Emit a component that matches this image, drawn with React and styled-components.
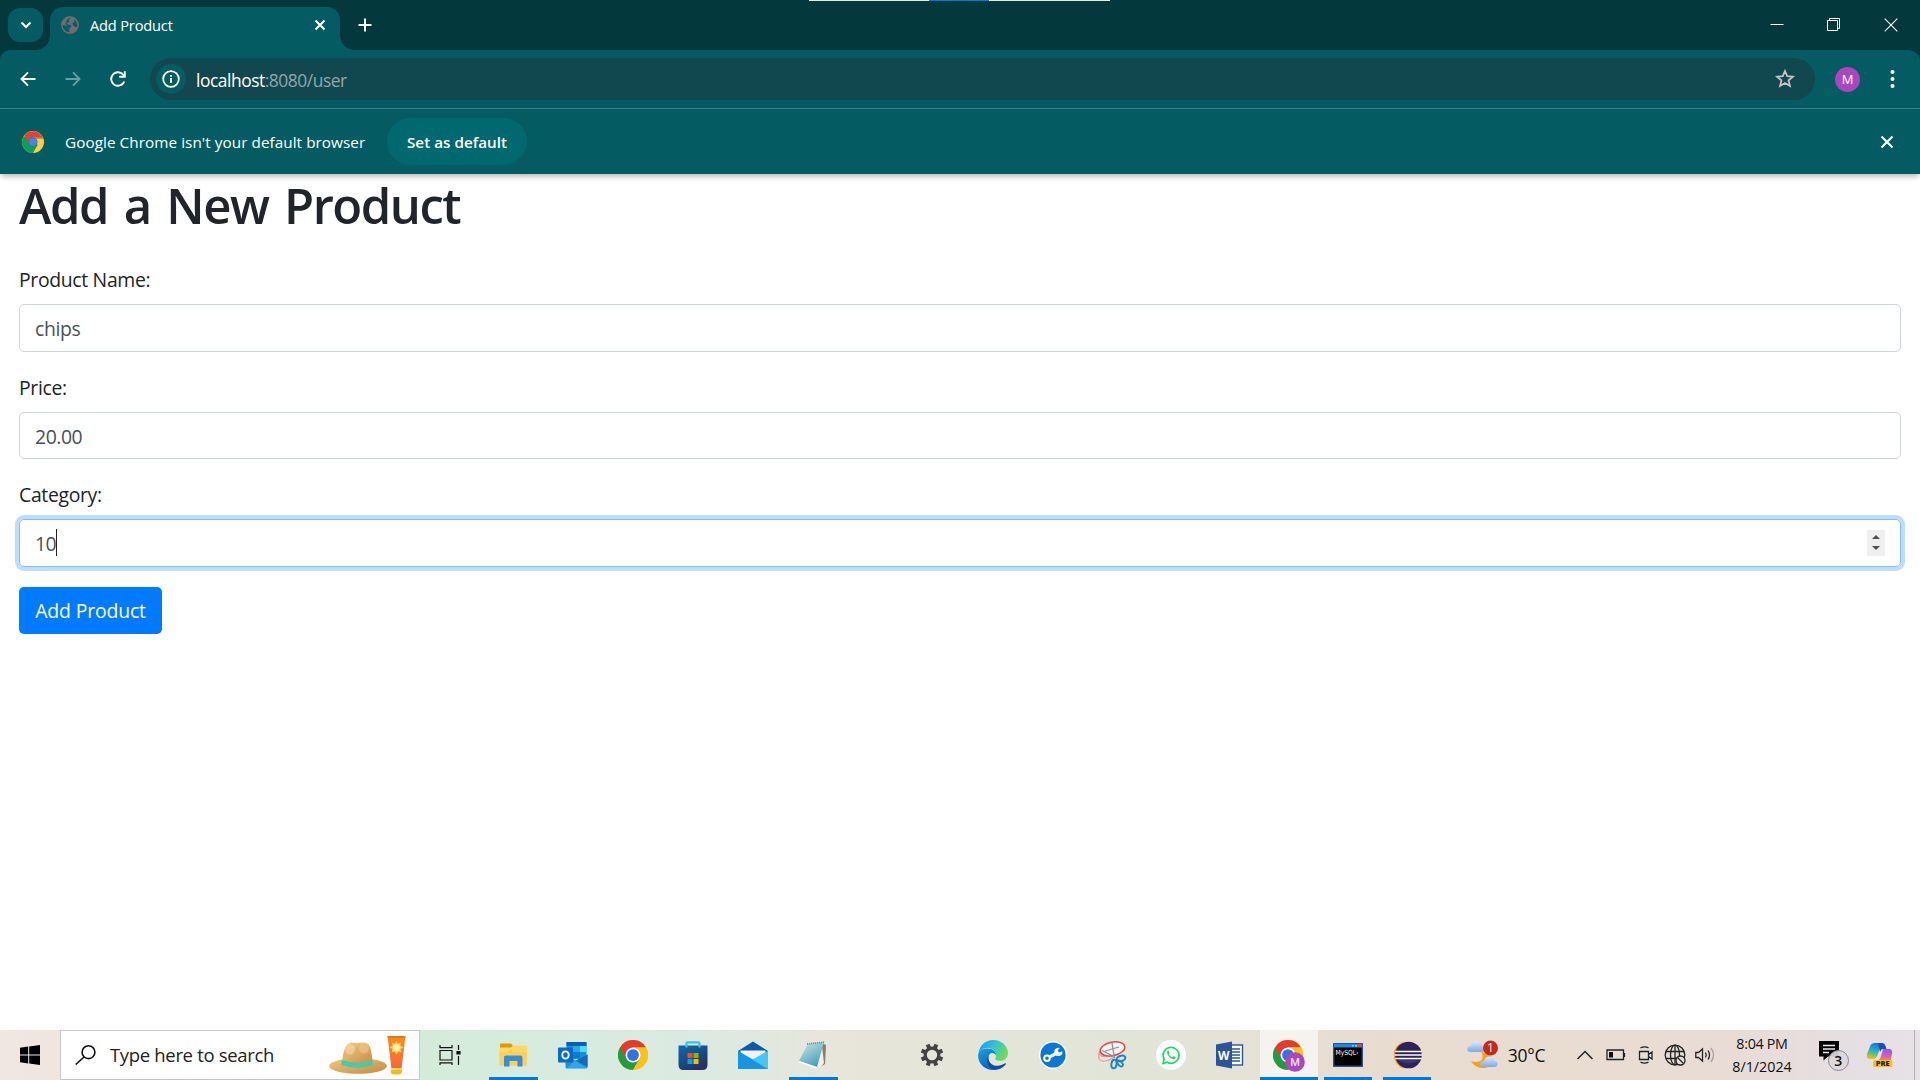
import React from 'react';
import styled, { createGlobalStyle, css } from 'styled-components';

const Global = createGlobalStyle`
  * { box-sizing: border-box; }
  html, body { margin: 0; padding: 0; background: #fff; overflow: hidden; }
  body { font-family: "Open Sans", "Noto Sans", sans-serif; }
  svg { display: block; flex: none; }
`;

const Screen = styled.div`
  width: 1920px;
  height: 1080px;
  display: flex;
  flex-direction: column;
  position: relative;
  overflow: hidden;
  background: #fff;
`;

const TopPeek = styled.div`
  position: absolute;
  top: 0;
  left: 809px;
  width: 301px;
  height: 1px;
  background: linear-gradient(90deg, #e4ece6 0 120px, #0078d7 120px 180px, #e4ece6 180px);
`;

const Text = styled.span`
  font-size: ${(p) => p.$size}px;
  letter-spacing: ${(p) => p.$track || 0}px;
  font-weight: ${(p) => p.$weight || 400};
  color: ${(p) => p.$color || 'inherit'};
  padding-top: ${(p) => p.$drop || 0}px;
  white-space: pre;
  line-height: 20px;
`;

/* browser chrome */

const TabStrip = styled.header`
  height: 50px;
  display: flex;
  align-items: center;
  padding-left: 8px;
  background: #03383d;
  color: #fff;
`;

const TabSearch = styled.button`
  width: 35px;
  height: 34px;
  border: 0;
  padding: 0;
  border-radius: 12px;
  background: #045c62;
  display: flex;
  align-items: center;
  justify-content: center;
`;

const Tab = styled.div`
  width: 290px;
  height: 43px;
  margin: 7px 0 0 7px;
  padding: 0 12px 7px 11px;
  display: flex;
  align-items: center;
  border-radius: 13px 13px 0 0;
  background: #045c62;
  position: relative;
  &::before, &::after {
    content: "";
    position: absolute;
    bottom: 0;
    width: 14px;
    height: 14px;
  }
  &::before { left: -14px; background: radial-gradient(circle at 0 0, transparent 13.5px, #045c62 14px); }
  &::after { right: -14px; background: radial-gradient(circle at 100% 0, transparent 13.5px, #045c62 14px); }
`;

const TabTitle = styled.div`
  flex: 1;
  display: flex;
  padding-left: 11px;
`;

const NewTab = styled.div`
  width: 50px;
  display: flex;
  justify-content: center;
`;

const Captions = styled.div`
  margin-left: auto;
  display: flex;
  height: 49px;
  padding-right: 1px;
`;

const Caption = styled.div`
  width: 57px;
  display: flex;
  align-items: center;
  justify-content: center;
`;

const ToolbarBack = styled.div`
  background: #03383d;
  height: 59px;
  flex: none;
`;

const Toolbar = styled.div`
  height: 59px;
  display: flex;
  align-items: center;
  border-radius: 10px 12px 0 0;
  box-shadow: inset 0 -1px 0 #3e8186;
  background: #045c62;
  padding: 0 0 1px 5px;
`;

const ToolButton = styled.div`
  width: 45px;
  display: flex;
  justify-content: center;
  opacity: ${(p) => (p.$dim ? 0.4 : 1)};
`;

const Omnibox = styled.div`
  width: 1665px;
  height: 42px;
  margin-left: 10px;
  padding: 0 19px 0 6px;
  border-radius: 21px;
  background: #11474e;
  display: flex;
  align-items: center;
`;

const SiteInfo = styled.div`
  width: 30px;
  height: 30px;
  border-radius: 50%;
  background: #045c62;
  display: flex;
  align-items: center;
  justify-content: center;
  margin-right: 10px;
`;

const Url = styled.div`
  flex: 1;
  display: flex;
`;

const Avatar = styled.div`
  width: 25px;
  height: 25px;
  border-radius: 50%;
  margin: 0 30px 0 20px;
  background: #ab47bc;
  color: #fff;
  display: flex;
  align-items: center;
  justify-content: center;
`;

const InfoBar = styled.div`
  height: 65px;
  flex: none;
  display: flex;
  align-items: center;
  padding: 0 26px 0 22px;
  background: #045c62;
  color: #fff;
  box-shadow: 0 3px 6px -1px rgba(0, 0, 0, 0.32);
`;

const InfoMessage = styled.div`
  width: 322px;
  margin-left: 21px;
  display: flex;
`;

const DefaultButton = styled.button`
  width: 140px;
  height: 47px;
  border: 0;
  padding: 0;
  border-radius: 24px;
  background: #00686f;
  color: #fff;
  font-family: inherit;
  display: flex;
  align-items: center;
  justify-content: center;
`;

const CloseInfo = styled.div`
  margin-left: auto;
`;

/* page */

const Page = styled.main`
  flex: 1;
  padding: 0 19px;
  color: #212529;
`;

const Title = styled.h1`
  margin: 0;
  height: 90px;
  font-size: 49px;
  line-height: 62px;
  font-weight: 600;
  letter-spacing: -1.5px;
  word-spacing: 4.5px;
`;

const Field = styled.div`
  height: 107.5px;
`;

const Label = styled.label`
  display: block;
  height: 40px;
  padding-top: 1px;
  line-height: 30px;
  font-size: 19.4px;
  letter-spacing: -0.33px;
`;

const Control = styled.div`
  height: 47.5px;
  border: 1px solid #ced4da;
  border-radius: 5px;
  padding: 0 15px;
  display: flex;
  align-items: center;
  color: #495057;
  ${(p) =>
    p.$focus &&
    css`
      border-color: #80bdff;
      box-shadow: 0 0 0 4px #bfdeff;
    `}
`;

const TextCaret = styled.i`
  width: 1px;
  height: 27px;
  background: #222;
`;

const Spinner = styled.div`
  width: 18px;
  height: 26px;
  margin-left: auto;
  background: #efefef;
  display: flex;
  flex-direction: column;
  align-items: center;
  justify-content: center;
  gap: 7px;
`;

const Submit = styled.button`
  width: 143px;
  height: 47px;
  border: 0;
  padding: 0;
  border-radius: 5px;
  background: #007bff;
  color: #fff;
  font-family: inherit;
  display: flex;
  align-items: center;
  justify-content: center;
`;

/* taskbar */

const Taskbar = styled.footer`
  height: 50px;
  flex: none;
  display: flex;
  background: linear-gradient(90deg, #efe7e1 0, #eee6df 60px, #d3ecd9 420px, #d8ebe1 600px, #dde9e1 740px,
    #e8e5db 820px, #e5e5d9 930px, #e1e5d8 1120px, #e4e3d6 1230px, #e8dcd0 1380px, #e9dcd1 1580px, #e8dcd6 1740px, #e5dfe3 1860px, #e6e2e6 1920px);
  color: #111;
`;

const Slot = styled.div`
  width: ${(p) => p.$w || 60}px;
  margin-left: ${(p) => p.$gap || 0}px;
  flex: none;
  height: 50px;
  display: flex;
  align-items: center;
  justify-content: center;
  background: ${(p) => (p.$active ? '#f4f3ee' : 'transparent')};
  ${(p) =>
    p.$line &&
    css`
      background-image: linear-gradient(#0078d7, #0078d7);
      background-repeat: no-repeat;
      background-size: ${p.$line}px 3px;
      background-position: center bottom;
    `}
`;

const Search = styled.div`
  width: 360px;
  height: 50px;
  flex: none;
  border: 1px solid #c8c8ca;
  background: #fff;
  display: flex;
  align-items: center;
  padding: 0 13px 0 14px;
`;

const SearchText = styled.div`
  flex: 1;
  padding-left: 14px;
  display: flex;
  color: #222;
`;

const Clock = styled.div`
  width: 80px;
  margin-left: 1px;
  display: flex;
  flex-direction: column;
  align-items: center;
  justify-content: center;
  gap: 3px;
`;

const ShowDesktop = styled.div`
  width: 6px;
  margin-left: auto;
  border-left: 1px solid #b5b1b4;
`;

const Stroke = ({ w, h, box, width = 2, color = '#fff', children, fill = 'none' }) => (
  <svg width={w} height={h} viewBox={box || `0 0 ${w} ${h}`} fill={fill} stroke={color} strokeWidth={width}>
    {children}
  </svg>
);

const ChromeMark = ({ size }) => (
  <svg width={size} height={size} viewBox="0 0 48 48">
    <circle cx="24" cy="24" r="24" fill="#fbc116" />
    <path d="M24 24 34.4 30 24 48A24 24 0 0 1 3.2 12Z" fill="#249a41" />
    <path d="M24 24V12H44.8A24 24 0 0 0 3.2 12L13.6 30Z" fill="#e33b2e" />
    <path d="M24 12H44.8A24 24 0 0 1 24 48L34.4 30Z" fill="#fbc116" />
    <circle cx="24" cy="24" r="12" fill="#fff" />
    <circle cx="24" cy="24" r="9.4" fill="#2f74e6" />
  </svg>
);

const ChromeClassic = () => (
  <svg width="22" height="22" viewBox="0 0 48 48">
    <circle cx="24" cy="24" r="24" fill="#ffcd40" />
    <path d="M24 24 34.400 30 24 48A24 24 0 0 1 4 11Z" fill="#0f9d58" />
    <path d="M24 24V14H45.800A24 24 0 0 0 5 10L15 27Z" fill="#db4437" />
    <path d="M24 14H45.800L46.500 17H32Z" fill="#8a4a2c" opacity=".6" />
    <circle cx="24" cy="24" r="9.800" fill="#2c6aa0" />
    <circle cx="24" cy="24" r="8.600" fill="#4285f4" />
  </svg>
);

const HatAndCream = () => (
  <svg width="78" height="42" viewBox="0 0 78 42">
    <defs>
      <linearGradient id="hat" x1="0" y1="0" x2="1" y2="1">
        <stop offset="0" stopColor="#f0c987" />
        <stop offset="1" stopColor="#c58a3c" />
      </linearGradient>
      <linearGradient id="tube" x1="0" y1="0" x2="0" y2="1">
        <stop offset="0" stopColor="#fb8c1c" />
        <stop offset="1" stopColor="#f4683b" />
      </linearGradient>
    </defs>
    <ellipse cx="30" cy="32" rx="29" ry="7.8" fill="url(#hat)" />
    <path d="M14 30C15 18 17 10 22 9 26 8 28 10 31 9 36 8 40 8 42 13 44 18 44 24 45 30 36 34 22 34 14 30Z" fill="url(#hat)" />
    <ellipse cx="22" cy="15" rx="5" ry="5.5" fill="#f6d9a6" opacity=".6" />
    <ellipse cx="36" cy="14" rx="5" ry="5.5" fill="#f6d9a6" opacity=".4" />
    <path d="M14 26Q30 31 44.500 26L45.500 31Q30 37 13 31Z" fill="#4cc9a8" />
    <path d="M59.500 2H77.500L73.500 35H63.500Z" fill="url(#tube)" />
    <path d="M59.500 2H77.500L77.200 4H59.800Z" fill="#e6780f" />
    <path d="M68.500 7 70 10 73 8.500 72.200 11.500 75.500 13.500 72.500 15 73.500 18.500 70.500 17.500 68.500 20.500 66.500 17.500 63.500 18.500 64.500 15 61.500 13.500 64.800 11.500 64 8.500 67 10Z" fill="#ffd25e" />
    <circle cx="68.500" cy="13.500" r="3.700" fill="#fff09b" />
    <path d="M63 34H74V38Q73 40.500 71 40.500H66Q63 40.500 63 38Z" fill="#f5b921" />
    <path d="M63 34H74V36H63Z" fill="#ffd964" />
  </svg>
);

const Folder = () => (
  <svg width="28" height="24" viewBox="0 0 28 24">
    <path d="M1 1.500Q1 .5 2 .5H12L14 3 12 5H1Z" fill="#d99b08" />
    <path d="M.5 4.500H12L14.500 2.500H27Q28 2.500 28 4V22.500H.5Z" fill="#ffd767" />
    <path d="M.5 9H28V22.500H.5Z" fill="#fccb52" opacity=".6" />
    <path d="M5 23.500V14.500Q5 12.500 7 12.500H21.500Q23.500 12.500 23.500 14.500V23.500H18.500V18H10.500V23.500Z" fill="#3b8cd2" />
  </svg>
);

const Outlook = () => (
  <svg width="30" height="28" viewBox="0 0 30 28">
    <rect x="8.500" y="1" width="20" height="17" rx="1" fill="#1490df" />
    <path d="M8.500 1H28.500V5H8.500Z" fill="#0a5fab" />
    <path d="M15 5H22V11H15Z" fill="#28a8ea" />
    <path d="M22 5H28.500V11H22Z" fill="#50d9ff" />
    <path d="M15 11H22V17H15Z" fill="#0f78d0" />
    <path d="M7.500 14 18 19.500 29.500 13.500V26Q29.500 27.500 28 27.500H9Q7.500 27.500 7.500 26Z" fill="#1e8fdd" />
    <path d="M18 19.500 29.500 13.500V26Z" fill="#1668b8" />
    <path d="M17 20 29 27H9Z" fill="#38b2ea" opacity=".7" />
    <rect x="0" y="6.500" width="15" height="15" rx="1" fill="#0a6bc6" />
    <ellipse cx="7.500" cy="14" rx="3.200" ry="3.600" fill="none" stroke="#fff" strokeWidth="1.900" />
  </svg>
);

const Store = () => (
  <svg width="30" height="30" viewBox="0 0 30 30">
    <defs>
      <linearGradient id="bag" x1="0" y1="0" x2=".6" y2="1">
        <stop offset="0" stopColor="#0b6bb0" />
        <stop offset="1" stopColor="#26325f" />
      </linearGradient>
    </defs>
    <path d="M.5 5.500H29.500V24.500Q29.500 30 24.500 30H5.500Q.5 30 .5 24.500Z" fill="url(#bag)" />
    <path d="M8.500 7.500V3.500Q8.500 2.300 9.700 2.300H20.300Q21.500 2.300 21.500 3.500V7.500" fill="none" stroke="#35c1f5" strokeWidth="2.200" />
    <path d="M9.500 13H14.500V18H9.500Z" fill="#f25022" />
    <path d="M15.500 13H20.500V18H15.500Z" fill="#7fba00" />
    <path d="M9.500 19H14.500V24H9.500Z" fill="#00a4ef" />
    <path d="M15.500 19H20.500V24H15.500Z" fill="#ffb900" />
  </svg>
);

const Mail = () => (
  <svg width="30" height="28" viewBox="0 0 30 28">
    <path d="M0 10 15 .5 30 10V14H0Z" fill="#0b5ba8" />
    <path d="M2.500 9.500H27.500V15L15 21 2.500 15Z" fill="#f2f2f2" />
    <path d="M0 10 15 18.500 30 10V28H0Z" fill="#2cb1ef" />
    <path d="M0 10V28H30Z" fill="#1a93e3" />
    <path d="M30 28 14.500 18.700 30 10Z" fill="#42c8f6" />
  </svg>
);

const Notepad = () => (
  <svg width="30" height="28" viewBox="0 0 30 28">
    <defs>
      <linearGradient id="pad" x1="0" y1="0" x2=".6" y2="1">
        <stop offset="0" stopColor="#cfe8ec" />
        <stop offset="1" stopColor="#4aa0b5" />
      </linearGradient>
    </defs>
    <path d="M24 2 28 4 27 23 22 26Z" fill="#8a7b62" />
    <path d="M24 5 26 22 22 27 19 25Z" fill="#f2efe6" />
    <path d="M10 2.500 26 1 19 26 1 20Z" fill="url(#pad)" />
    <path d="M1 20 19 26 18 27.500 1 21.500Z" fill="#fafafa" />
    <path d="M9 3 26 1.200" stroke="#7d8588" strokeWidth="1.800" strokeDasharray="1 1" />
  </svg>
);

const Gear = () => (
  <svg width="24" height="24" viewBox="-12 -12 24 24">
    {[22.5, 67.5, 112.5, 157.5, 202.5, 247.5, 292.5, 337.5].map((a) => (
      <rect key={a} x="-2" y="-11.300" width="4" height="4.500" fill="#424242" transform={`rotate(${a})`} />
    ))}
    <circle r="6.800" fill="none" stroke="#424242" strokeWidth="3.200" />
  </svg>
);

const Edge = () => (
  <svg width="30" height="30" viewBox="0 0 30 30">
    <defs>
      <linearGradient id="edgeTop" x1="0" y1=".2" x2="1" y2=".6">
        <stop offset="0" stopColor="#1d9be5" />
        <stop offset=".5" stopColor="#33c4d4" />
        <stop offset="1" stopColor="#6ee04d" />
      </linearGradient>
      <linearGradient id="edgeLow" x1="0" y1="0" x2=".5" y2="1">
        <stop offset="0" stopColor="#1d9ee4" />
        <stop offset="1" stopColor="#0c62b8" />
      </linearGradient>
    </defs>
    <path d="M.4 13.500C1.500 5 8 0 15 0 24 0 30 6.500 30 13 30 18 26.500 20.800 22.500 20.800 19 20.800 16.500 19.700 17.300 18.200 19.500 15.500 17.500 8.500 10.500 8 6 7.800 2 10 .4 13.500Z" fill="url(#edgeTop)" />
    <path d="M.2 15C.5 10.500 5 8.500 10 8.500 15 8.700 18.500 12 17.900 15.500 17 12.800 13 11.500 11 15 8.500 20 13 27.500 20 28.700 18 30 14 30.200 11 29.500 4 27.500-.3 21.500.2 15Z" fill="url(#edgeLow)" />
    <path d="M11 15C8.500 21 14 26.500 20 25.700 24 25.300 26 23.500 27.500 23.200 28.300 23.200 28 24.300 27 25.200 23.500 29 19 30.200 15.500 29.500 9.500 27.500 7.500 20 11 15Z" fill="#0d4f9a" />
  </svg>
);

const Wrench = () => (
  <svg width="28" height="28" viewBox="0 0 28 28">
    <circle cx="14" cy="14" r="13.300" fill="#0878d4" stroke="#fff" strokeWidth="1.400" />
    <path d="M10 16.300 18.500 11.500" stroke="#fff" strokeWidth="3.200" />
    <circle cx="8" cy="17.300" r="2.800" fill="none" stroke="#fff" strokeWidth="2" />
    <path d="M20.800 7 18.700 9.600 20 11.600 23.300 10.300Q24 14 20.500 15 17.500 15.500 15.500 13.500 14.500 9 17 7.500 19 6.500 20.800 7Z" fill="#fff" />
  </svg>
);

const Snip = () => (
  <svg width="30" height="30" viewBox="0 0 30 30" fill="none">
    <path d="M2 13Q0 22 8 21 14 20 17 17" stroke="#ef9b96" strokeWidth="1.200" />
    <path d="M2 11.500Q2 18 9 16" stroke="#e88" strokeWidth="1" />
    <ellipse cx="15.500" cy="9" rx="12.500" ry="6.800" fill="#f4f3f1" stroke="#e2454b" strokeWidth="1.500" transform="rotate(-12 15 9)" />
    <path d="M15 3 17.500 18M5 10.500 18 17M8 11 22 7" stroke="#8a9399" strokeWidth="1.300" />
    <ellipse cx="24" cy="18.500" rx="4.500" ry="2.700" stroke="#1c83c6" strokeWidth="2" transform="rotate(-18 24 18.500)" />
    <ellipse cx="17" cy="24" rx="2.600" ry="4.300" stroke="#1c83c6" strokeWidth="2" transform="rotate(8 17 24)" />
    <ellipse cx="23" cy="23.500" rx="2" ry="3.600" stroke="#1c83c6" strokeWidth="1.800" transform="rotate(-42 23 23.500)" />
  </svg>
);

const WhatsApp = () => (
  <svg width="30" height="30" viewBox="0 0 30 30">
    <circle cx="15" cy="15" r="15" fill="#fff" />
    <path d="M7 23.500 8.200 19.200A7.900 7.900 0 1 1 11.200 22.200Z" fill="none" stroke="#27d366" strokeWidth="1.700" />
    <path d="M12.300 10.500C11 11 10.700 12.600 11.500 14.200 12.700 16.700 14.700 18.500 17 19.200 18.500 19.500 19.600 18.700 19.700 17.300L17.400 16.100 16.300 17.400C14.800 16.800 13.500 15.500 12.800 14.200L13.700 13Z" fill="#27d366" />
  </svg>
);

const Word = () => (
  <svg width="28" height="28" viewBox="0 0 28 28">
    <rect x="13" y="4" width="13.500" height="20" fill="#fff" stroke="#2a5699" strokeWidth="1.400" />
    <path d="M16 8H24M16 11H24M16 14H24M16 17H24M16 20H24" stroke="#2a5699" strokeWidth="1.400" />
    <path d="M0 3.500 16 .5V27.500L0 24.500Z" fill="#2a5699" />
    <text x="7.800" y="18.800" textAnchor="middle" fontFamily="Open Sans, sans-serif" fontWeight="700" fontSize="13" textLength="11.500" lengthAdjust="spacingAndGlyphs" fill="#fff">W</text>
  </svg>
);

const ChromeProfile = () => (
  <svg width="32" height="34" viewBox="0 0 32 34">
    <g transform="translate(0 2)"><ChromeMark size={30} /></g>
    <circle cx="22" cy="24" r="9.800" fill="#ab47bc" />
    <text x="22" y="28" textAnchor="middle" fontFamily="Roboto, sans-serif" fontWeight="500" fontSize="11" fill="#f6e4f8">M</text>
  </svg>
);

const MySql = () => (
  <svg width="30" height="24" viewBox="0 0 30 24">
    <rect x=".6" y=".6" width="28.800" height="22.800" rx="1" fill="#000" stroke="#2b4f94" strokeWidth="1.600" />
    <path d="M1 1H29V4.500H1Z" fill="#1c86e0" />
    <path d="M19 2H21V3.500H19ZM22 2H24V3.500H22Z" fill="#8cc8f5" />
    <path d="M25 1.500H28V4H25Z" fill="#e0483c" />
    <text x="2.500" y="12.300" fontFamily="DejaVu Sans, sans-serif" fontSize="7" textLength="23" lengthAdjust="spacingAndGlyphs" fill="#fff">MySQL›</text>
  </svg>
);

const Eclipse = () => (
  <svg width="30" height="28" viewBox="0 0 30 28">
    <path d="M12 .5A14 14 0 0 0 12 27.500 18 18 0 0 1 12 .5Z" fill="#f7941e" />
    <circle cx="16.500" cy="14" r="13.300" fill="#2c2255" />
    <path d="M5 17.500H28.500Q26 22 17 22.500 8 22 5 17.500Z" fill="#413a86" opacity=".7" />
    <path d="M3.300 10.500H29.800M2.500 14H30.500M3.300 17.500H29.800" stroke="#fff" strokeWidth="1.700" />
  </svg>
);

const Weather = () => (
  <svg width="32" height="30" viewBox="0 0 32 30">
    <defs>
      <linearGradient id="cloud" x1="0" y1="0" x2="0" y2="1">
        <stop offset="0" stopColor="#dcebfc" />
        <stop offset="1" stopColor="#7fa9e2" />
      </linearGradient>
    </defs>
    <path d="M14 11Q20 24 4 21.500 9 29 18 28 26 26 25 17Z" fill="#f6a11c" />
    <path d="M4 12Q0 12 .3 8.800 .8 5.500 4 6 5 1 9.500 1 14 1 15 5.500 18 6 17.500 9.500 17 12 14 12Z" fill="url(#cloud)" />
    <path d="M17 27Q13 27 13.300 23.500 14 20.500 17 21 18 16.500 22.500 16.500 26.500 16.500 27.500 20.500 31 21 30.500 24.500 30 27 27 27Z" fill="url(#cloud)" />
    <circle cx="23.500" cy="8" r="7.500" fill="#c42b1c" />
    <text x="23.500" y="12.300" textAnchor="middle" fontFamily="Open Sans, sans-serif" fontSize="12" fill="#fff">1</text>
  </svg>
);

const Notifications = () => (
  <svg width="32" height="32" viewBox="0 0 32 32">
    <path d="M1 2H21V17.500H10L5.500 21.500V17.500H1Z" fill="#000" />
    <path d="M5 6.500H17M5 10H17M5 13.500H11" stroke="#f0eaee" strokeWidth="1.300" />
    <circle cx="20.500" cy="21.500" r="10" fill="#dcd8dc" fillOpacity=".93" stroke="#8b888c" strokeWidth="1" />
    <text x="20.300" y="26.700" textAnchor="middle" fontFamily="Open Sans, sans-serif" fontWeight="600" fontSize="14" fill="#111">3</text>
  </svg>
);

const Copilot = () => (
  <svg width="28" height="26" viewBox="0 0 28 26">
    <defs>
      <linearGradient id="coLeft" x1=".5" y1="0" x2=".3" y2="1">
        <stop offset="0" stopColor="#1673d4" />
        <stop offset=".45" stopColor="#2aa9d8" />
        <stop offset=".75" stopColor="#7fc650" />
        <stop offset="1" stopColor="#f0c31c" />
      </linearGradient>
      <linearGradient id="coRight" x1=".5" y1="0" x2=".4" y2="1">
        <stop offset="0" stopColor="#8a5cf0" />
        <stop offset=".6" stopColor="#df5fa8" />
        <stop offset="1" stopColor="#f38b5a" />
      </linearGradient>
    </defs>
    <path d="M9 1H15.500L12 12Q10.500 17 7 17H4Q0 17 1 12L4 4.500Q5 1 9 1Z" fill="url(#coLeft)" />
    <path d="M12 1H16Q18.500 1 19.500 4L20.500 7H17Q15 7 14 10Z" fill="#1d4fae" />
    <path d="M18 7H23Q27 7 26 12L24.500 19H12Q14 18 15 14L16.500 9Q17 7 18 7Z" fill="url(#coRight)" />
    <rect x="7" y="18" width="19.500" height="7" rx="1.500" fill="#ffc30f" />
    <text x="16.700" y="24.200" textAnchor="middle" fontFamily="Open Sans, sans-serif" fontWeight="800" fontSize="7" textLength="14" lengthAdjust="spacingAndGlyphs" fill="#222">PRE</text>
  </svg>
);

function BrowserChrome() {
  return (
    <>
      <TabStrip>
        <TabSearch>
          <Stroke w={12} h={8} width={2}><path d="M1.500 1.500 6 6 10.500 1.500" /></Stroke>
        </TabSearch>
        <Tab>
          <svg width="18" height="18" viewBox="0 0 18 18">
            <circle cx="9" cy="9" r="8.900" fill="#6f6b70" />
            <path d="M10.500 1.900C8 2.300 7 3.500 8 4.700 9 5.800 7.500 6.800 6 6.500 5 7.500 5.500 8.800 8 8.800 10.500 9 11 10.800 9 11.800 7.500 12.600 9 14.500 8 16.300 3.500 15.500 1.500 12 1.700 8.800L6 10.500 6.500 12.500 8 14 5 8.500 4 7.500C6 7 5 4 7 3 8 2 9.500 1.700 10.500 1.900ZM13 3.500C15 5 16.500 7.500 16.200 10.500L14 11 12.300 9.300 11.500 7 13.500 6Z" fill="#045c62" />
          </svg>
          <TabTitle><Text $size={14.6} $track={-0.16}>Add Product</Text></TabTitle>
          <Stroke w={16} h={16} width={2}><path d="M3.500 3.500 12.500 12.500M12.500 3.500 3.500 12.500" /></Stroke>
        </Tab>
        <NewTab>
          <Stroke w={14} h={14} width={2}><path d="M7 .5V13.500M.5 7H13.500" /></Stroke>
        </NewTab>
        <Captions>
          <Caption><Stroke w={14} h={14} width={1}><path d="M.5 6.500H13.500" /></Stroke></Caption>
          <Caption><Stroke w={14} h={14} width={1}><path d="M.5 2.500H10.500V12.500H.5ZM2.500 2V.5H12.500V10.500H11" /></Stroke></Caption>
          <Caption><Stroke w={14} h={14} width={1.1}><path d="M.7.7 13.300 13.300M13.300.7.7 13.300" /></Stroke></Caption>
        </Captions>
      </TabStrip>
      <ToolbarBack>
        <Toolbar>
          <ToolButton><Stroke w={16} h={16} width={1.9}><path d="M15.500 8H2M8 1.300 1.500 8 8 14.700" /></Stroke></ToolButton>
          <ToolButton $dim><Stroke w={16} h={16} width={1.9}><path d="M.5 8H14M8 1.300 14.500 8 8 14.700" /></Stroke></ToolButton>
          <ToolButton>
            <Stroke w={18} h={18} width={1.9}>
              <path d="M15.300 11.500A6.800 6.800 0 1 1 14.500 5L15.500 6.300" />
              <path d="M15.800 1.200V6.800H10.200" />
            </Stroke>
          </ToolButton>
          <Omnibox>
            <SiteInfo>
              <Stroke w={18} h={18} width={1.8}><circle cx="9" cy="9" r="7.800" /><path d="M9 8V13M9 5V6.800" /></Stroke>
            </SiteInfo>
            <Url>
              <Text $size={17.4} $track={-0.46} $color="#fff" $drop={1}>localhost</Text>
              <Text $size={17.4} $track={-0.46} $color="#8fa9ac" $drop={1}>:8080/user</Text>
            </Url>
            <Stroke w={22} h={22} width={1.8} color="#c9c3c2">
              <path d="M11 3 13.200 8.200 18.900 8.700 14.600 12.400 15.900 18 11 15.100 6.100 18 7.400 12.400 3.100 8.700 8.800 8.200Z" />
            </Stroke>
          </Omnibox>
          <Avatar><Text $size={13} $weight={400}>M</Text></Avatar>
          <svg width="5" height="18" viewBox="0 0 5 18" fill="#fff">
            <circle cx="2.500" cy="2" r="2" /><circle cx="2.500" cy="9" r="2" /><circle cx="2.500" cy="16" r="2" />
          </svg>
        </Toolbar>
      </ToolbarBack>
      <InfoBar>
        <ChromeClassic />
        <InfoMessage><Text $size={15.3} $track={0.05}>Google Chrome isn't your default browser</Text></InfoMessage>
        <DefaultButton><Text $size={15.2} $weight={600} $track={0.03} $drop={1}>Set as default</Text></DefaultButton>
        <CloseInfo><Stroke w={14} h={14} width={2}><path d="M1.500 1.500 12.500 12.500M12.500 1.500 1.500 12.500" /></Stroke></CloseInfo>
      </InfoBar>
    </>
  );
}

function ProductForm() {
  return (
    <Page>
      <Title>Add a New Product</Title>
      <Field>
        <Label>Product Name:</Label>
        <Control><Text $size={19.4} $track={-0.35} $drop={2}>chips</Text></Control>
      </Field>
      <Field>
        <Label>Price:</Label>
        <Control><Text $size={19.4} $track={-0.45} $drop={3}>20.00</Text></Control>
      </Field>
      <Field>
        <Label>Category:</Label>
        <Control $focus>
          <Text $size={19.4} $track={-0.5} $drop={2}>10</Text>
          <TextCaret />
          <Spinner>
            <svg width="8" height="4" viewBox="0 0 8 4"><path d="M4 0 8 4H0Z" fill="#505050" /></svg>
            <svg width="8" height="4" viewBox="0 0 8 4"><path d="M0 0H8L4 4Z" fill="#505050" /></svg>
          </Spinner>
        </Control>
      </Field>
      <Submit><Text $size={19.4} $track={-0.15} $drop={2}>Add Product</Text></Submit>
    </Page>
  );
}

function SystemTaskbar() {
  return (
    <Taskbar>
      <Slot>
        <svg width="20" height="20" viewBox="0 0 20 20">
          <path d="M0 2.700 8.200 1.600V9.500H0ZM9.200 1.400 20 0V9.500H9.200ZM0 10.500H8.200V18.400L0 17.300ZM9.200 10.500H20V20L9.200 18.600Z" />
        </svg>
      </Slot>
      <Search>
        <Stroke w={21} h={20} width={1.6} color="#111"><circle cx="13.500" cy="7.200" r="6.400" /><path d="M9 12 .7 19.500" /></Stroke>
        <SearchText><Text $size={18.5} $track={-0.33}>Type here to search</Text></SearchText>
        <HatAndCream />
      </Search>
      <Slot>
        <Stroke w={22} h={20} width={1.2} color="#111">
          <path d="M1 5.500H13V15H1ZM1 0V2.600H13V0M1 20V17.800H13V20M19.500 0V5M19.500 11V20" />
          <path d="M18 6.500H21V9H18Z" fill="#111" />
        </Stroke>
      </Slot>
      <Slot $gap={3} $line={49}><Folder /></Slot>
      <Slot><Outlook /></Slot>
      <Slot><ChromeMark size={30} /></Slot>
      <Slot><Store /></Slot>
      <Slot><Mail /></Slot>
      <Slot $line={49}><Notepad /></Slot>
      <Slot $gap={59}><Gear /></Slot>
      <Slot $w={61}><Edge /></Slot>
      <Slot><Wrench /></Slot>
      <Slot $w={58}><Snip /></Slot>
      <Slot $w={59}><WhatsApp /></Slot>
      <Slot $w={60}><Word /></Slot>
      <Slot $w={58} $active $line={58}><ChromeProfile /></Slot>
      <Slot $line={48}><MySql /></Slot>
      <Slot $w={58} $line={48}><Eclipse /></Slot>
      <Slot $gap={29} $w={36}><Weather /></Slot>
      <Slot $w={51}><Text $size={17.5} $track={-0.3}>30°C</Text></Slot>
      <Slot $gap={18} $w={30}><Stroke w={16} h={10} width={1.5} color="#222"><path d="M.5 9 8 1.500 15.500 9" /></Stroke></Slot>
      <Slot $w={31}>
        <Stroke w={20} h={12} width={1.3} color="#222">
          <path d="M1 1H17.500V10.500H1ZM18.500 4V8" /><path d="M3 3H7V8.500H3Z" fill="#111" stroke="none" />
        </Stroke>
      </Slot>
      <Slot $w={30}>
        <Stroke w={16} h={18} width={1.3} color="#222">
          <path d="M1.500 5.500H10.500V13.500H1.500ZM10.500 8.500 14 6V13L10.500 10.500M2.500 1.800Q6.500 0 10.500 1.800M2.500 16.200Q6.500 18 10.500 16.200" />
        </Stroke>
      </Slot>
      <Slot $w={28}>
        <Stroke w={22} h={22} width={1.3} color="#222">
          <circle cx="11" cy="11" r="9.800" /><ellipse cx="11" cy="11" rx="4.500" ry="9.800" />
          <path d="M2 7.500H20M2 14.500H13M11 1V21" />
          <circle cx="16.500" cy="16.500" r="4.500" fill="#eadfd8" /><path d="M13.500 13.500 19.500 19.500" />
        </Stroke>
      </Slot>
      <Slot $w={32}>
        <Stroke w={20} h={18} width={1.3} color="#222">
          <path d="M.8 6.500H3.500L7.500 3V15L3.500 11.500H.8ZM10.500 6.500Q12 9 10.500 11.500M13 4.500Q16 9 13 13.500" />
          <path d="M16 2Q21 9 16 16" stroke="#a9a09c" />
        </Stroke>
      </Slot>
      <Clock>
        <Text $size={14.3} $track={-0.3}>8:04 PM</Text>
        <Text $size={14.3} $track={0}>8/1/2024</Text>
      </Clock>
      <Slot $gap={7} $w={50}><Notifications /></Slot>
      <Slot $w={42}><Copilot /></Slot>
      <ShowDesktop />
    </Taskbar>
  );
}

export default function App() {
  return (
    <Screen>
      <Global />
      <BrowserChrome />
      <ProductForm />
      <SystemTaskbar />
      <TopPeek />
    </Screen>
  );
}
